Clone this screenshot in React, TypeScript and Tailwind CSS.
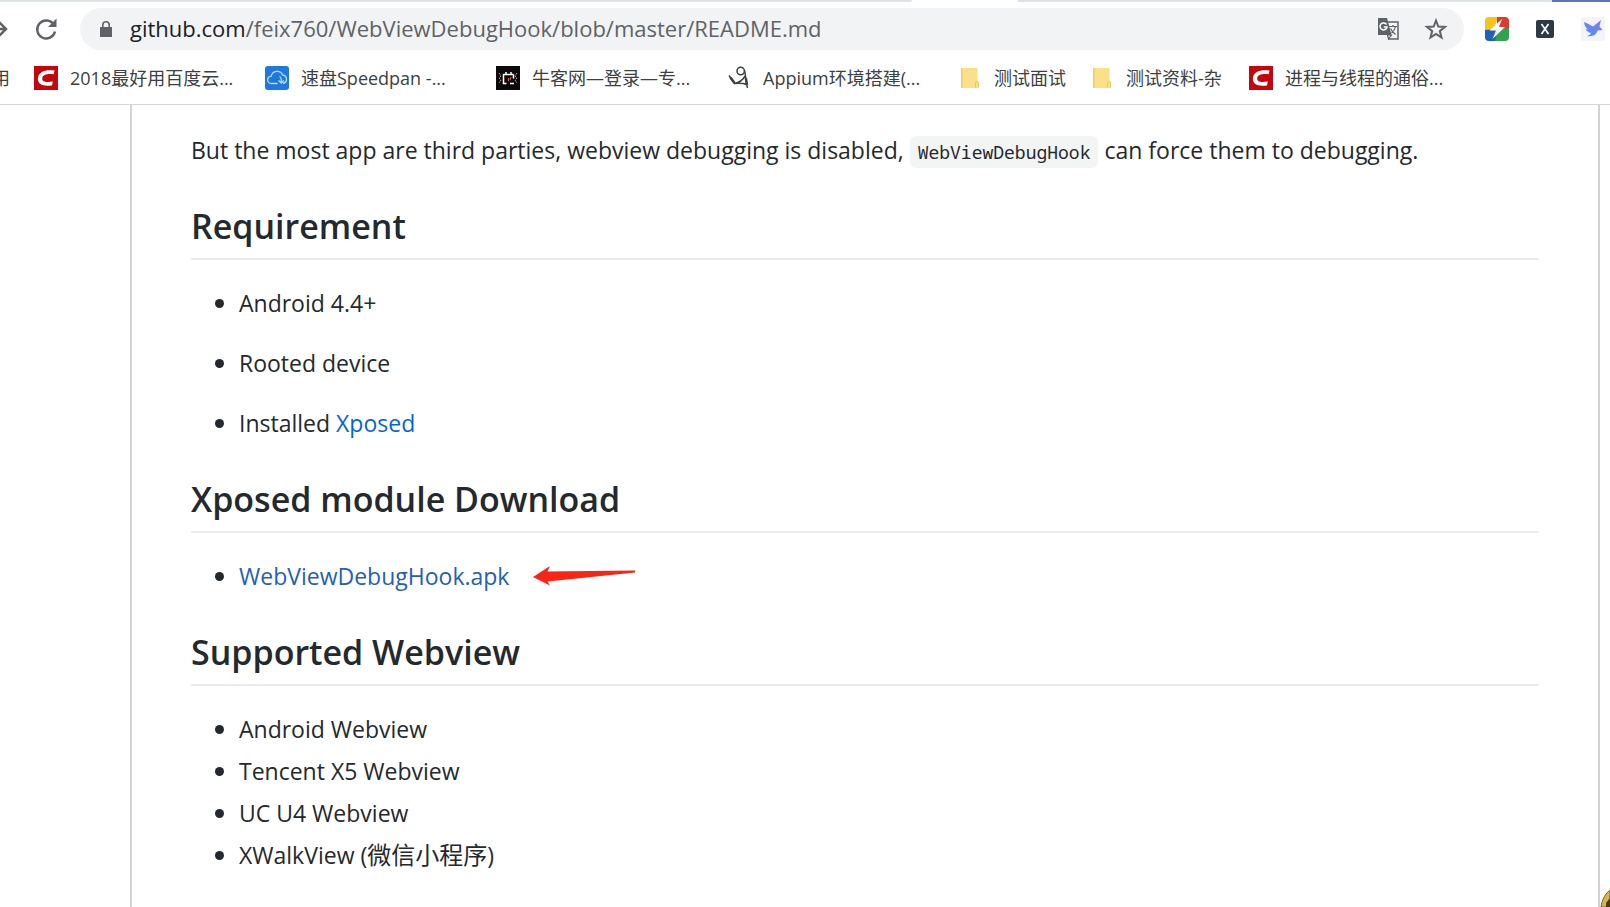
import type { ReactNode } from "react";

interface Bookmark {
  title: string;
  icon: ReactNode;
  width?: string;
}

function CsdnIcon() {
  return (
    <svg viewBox="0 0 24 24" className="size-6">
      <rect width="24" height="24" fill="#c4070f" />
      <path
        d="M20.5 4.6 19.7 8.2C14 7.4 8.6 8.2 8.2 12.2c-.4 4 4.600 4.300 10.600 3.400L18 19.400C10 20.600 3.600 19.200 3.900 12.600 4.200 5.600 11.500 3.400 20.500 4.600Z"
        fill="#fff"
      />
    </svg>
  );
}

function CloudIcon() {
  return (
    <svg viewBox="0 0 24 24" className="size-6" fill="none">
      <rect width="24" height="24" rx="3" fill="#1f78dd" />
      <path
        d="M12.500 17.500H6.500a3.700 3.700 0 0 1-.3-7.400A6 6 0 0 1 17.600 9a4.300 4.300 0 0 1 .4 8.500M14.500 10.500c1.500.5 2 2 1.800 5.500M13.500 14.500l2.800 2.500 2.500-2.500"
        stroke="#b9dcff"
        strokeWidth="1.3"
      />
    </svg>
  );
}

function NowcoderIcon() {
  return (
    <svg viewBox="0 0 24 24" className="size-6" fill="none">
      <rect width="24" height="24" fill="#0b0909" />
      <path d="M10.500 8.500H7.500v9h3M7 8.500h10.500M10 8.500V6M15 8.500V6M17.500 8.500v4M14 17.500h4" stroke="#fff" strokeWidth="1.500" />
      <path d="M3 7l2 3-2 2 2 2-2 3M21 7l-2 3 2 2-2 2 2 3" stroke="#c39a95" strokeDasharray="2 1" />
      <path d="M12.500 12v3M15 11l-1 3" stroke="#e0655c" />
    </svg>
  );
}

function AppiumIcon() {
  return (
    <svg viewBox="0 0 24 24" className="size-6" fill="none" stroke="#3c4043" strokeWidth="1.500">
      <circle cx="13.700" cy="5" r="3.700" />
      <path d="M17.500 4.500c1.500 5 1 11 3 17.500M18.500 9.500c-3 5-7.500 7.500-11 8L2 9.500M7 17.500c4-.5 8.500-1 12.500 1" />
      <path d="M3.500 11.500l4 5.500M18.800 12l1.200 7" strokeWidth="2.500" />
    </svg>
  );
}

function FolderIcon() {
  return (
    <svg viewBox="0 0 24 24" className="size-6">
      <path d="M3 2h16.500v14l1.500.5V22H3Z" fill="#fbe08a" />
      <path d="M3 2h1.500v20H3Z" fill="#f0cd67" />
      <path d="M17.500 21.500v-4.500a1.500 1.500 0 0 1 3 0v4.500" fill="none" stroke="#ecc65c" />
    </svg>
  );
}

const bookmarks: Bookmark[] = [
  { title: "2018最好用百度云...", icon: <CsdnIcon />, width: "w-[171px]" },
  { title: "速盘Speedpan -...", icon: <CloudIcon />, width: "w-[171px]" },
  { title: "牛客网—登录—专...", icon: <NowcoderIcon />, width: "w-[171px]" },
  { title: "Appium环境搭建(...", icon: <AppiumIcon />, width: "w-[171px]" },
  { title: "测试面试", icon: <FolderIcon /> },
  { title: "测试资料-杂", icon: <FolderIcon />, width: "w-[99px]" },
  { title: "进程与线程的通俗...", icon: <CsdnIcon />, width: "w-[171px]" },
];

function TabStrip() {
  return (
    <div className="flex h-[2px] shrink-0 justify-between">
      <div className="w-[912px] rounded-br bg-[#dee1e6]" />
      <div className="ml-[106px] flex-1 bg-[#dee1e6]" />
      <div className="w-[58px] bg-[#5b76b4]" />
    </div>
  );
}

function Toolbar() {
  return (
    <div className="flex h-[54px] shrink-0 items-center">
      <button aria-label="Forward" className="w-[34px] shrink-0">
        <svg viewBox="0 0 24 24" className="-ml-4 size-6" fill="none" stroke="#5f6368" strokeWidth="2.500">
          <path d="M2 12h20M14 4l8 8-8 8" />
        </svg>
      </button>
      <button aria-label="Reload" className="w-[46px] shrink-0">
        <svg viewBox="0 0 24 24" className="size-6" fill="none" stroke="#5f6368" strokeWidth="2.400">
          <path d="M19.700 7.500A9 9 0 1 0 21 14.500" />
          <path d="M22.500 1.500v8.500H14Z" fill="#5f6368" stroke="none" />
        </svg>
      </button>
      <div className="flex h-[42px] flex-1 items-center rounded-full bg-[#f1f3f4] pr-4 pl-5">
        <svg viewBox="0 0 12 16" className="h-4 w-3 shrink-0">
          <path d="M0 6h12v10H0Z" fill="#5f6368" />
          <path d="M2.800 7V4a3.200 3.200 0 0 1 6.400 0v3" fill="none" stroke="#5f6368" strokeWidth="1.600" />
        </svg>
        <div className="ml-[18px] flex-1 pb-[2px] text-[22px] leading-8 text-[#5f6368]">
          <span className="text-[#202124]">github.com</span>/feix760/WebViewDebugHook/blob/master/README.md
        </div>
        <button aria-label="Translate this page">
          <svg viewBox="0 0 24 24" className="size-6">
            <path d="M10 5h12v17H12" fill="#f1f3f4" stroke="#5f6368" strokeWidth="1.500" />
            <path d="M2 1h9l4.500 17H2Z" fill="#5f6368" />
            <path d="M10.500 7.500A3.500 3.500 0 1 0 11 10H7.800" fill="none" stroke="#fff" strokeWidth="1.500" />
            <path d="M13 9.500h8M17 8v1.500M19.500 9.500c-.5 3-2 5-4 6.500M14.500 11.500c1 2 3 4.500 5 6M11.500 18l1 4 3-4Z" fill="none" stroke="#5f6368" strokeWidth="1.200" />
          </svg>
        </button>
        <button aria-label="Bookmark this page" className="ml-6">
          <svg viewBox="0 0 24 24" className="size-6" fill="none" stroke="#5f6368" strokeWidth="2">
            <path d="M12 3.500l2.300 6 6.700.4-5.200 4.200 1.700 6.400L12 17l-5.500 3.500 1.700-6.400L3 9.900l6.700-.4Z" />
          </svg>
        </button>
      </div>
      <div className="mr-[5px] ml-[21px] flex shrink-0 items-center gap-[27px]">
        <svg viewBox="0 0 24 24" className="size-6">
          <clipPath id="bolt-tile">
            <rect width="24" height="24" rx="4" />
          </clipPath>
          <g clipPath="url(#bolt-tile)">
            <path d="M0 0h13L9 12 0 14Z" fill="#f6c41c" />
            <path d="M12 0h12v12l-12 1Z" fill="#e03a2c" />
            <path d="M24 11v13H9l3-12Z" fill="#2fa34f" />
            <path d="M0 13l12-1-2 12H0Z" fill="#1b62b8" />
            <path d="M17 2 4.500 13.500h6.500L7.500 22l12.500-12h-6Z" fill="#fff" />
          </g>
        </svg>
        <svg viewBox="0 0 18 18" className="size-[18px]">
          <rect width="18" height="18" rx="2" fill="#2c3a44" />
          <path d="M5.500 4l7 10M12.500 4l-7 10" stroke="#fff" strokeWidth="1.700" />
        </svg>
        <svg viewBox="0 0 24 24" className="size-6">
          <linearGradient id="bird" x1="0" y1="1" x2="1" y2="0">
            <stop offset="0" stopColor="#4f8df7" />
            <stop offset="1" stopColor="#8a7bf0" />
          </linearGradient>
          <rect width="24" height="24" rx="2" fill="#f3f3fa" />
          <path d="M3 5c3 1.500 6 2.500 9 4.500L20 3l-1.500 6.500 3 3.500-5 .5C15.500 17.500 12 20 6 19c2-.5 3.500-1.500 4-3-2.500-.5-4.500-2-5.500-4l2.500.5C4.500 10.500 3.500 8 3 5Z" fill="url(#bird)" />
        </svg>
      </div>
    </div>
  );
}

function BookmarksBar() {
  return (
    <nav className="flex h-[49px] shrink-0 items-center overflow-hidden border-b border-[#d5d7da] pb-1 text-[18px] leading-6 text-[#3c4043]">
      <a href="#apps" className="flex w-[34px] shrink-0">
        <span className="-ml-2">用</span>
      </a>
      {bookmarks.map((bookmark) => (
        <a key={bookmark.title} href="#bookmark" className="mr-6 flex shrink-0 items-center gap-3 whitespace-nowrap">
          {bookmark.icon}
          <span className={bookmark.width}>{bookmark.title}</span>
        </a>
      ))}
    </nav>
  );
}

function SectionHeading({ children }: { children: ReactNode }) {
  return (
    <h2 className="mt-9 mb-[25px] border-b-2 border-[#eaecef] pb-[9px] text-[34px] leading-[45px] font-semibold">
      {children}
    </h2>
  );
}

function ListItem({ children }: { children: ReactNode }) {
  return (
    <li className="flex items-center gap-[15px]">
      <span className="size-[9px] shrink-0 rounded-full bg-[#24292e]" />
      <div className="flex h-9 items-center whitespace-pre">{children}</div>
    </li>
  );
}

function Arrow() {
  return (
    <svg viewBox="0 0 104 20" className="ml-6 h-5 w-[104px]">
      <path d="M0 11 17 0 14.500 5.500 102 4.500v2L14.500 15.500 17 19.500Z" fill="#fb2314" />
    </svg>
  );
}

export default function App() {
  return (
    <div className="relative flex h-screen flex-col overflow-hidden bg-white font-['Open_Sans','Noto_Sans_CJK_SC',sans-serif]">
      <TabStrip />
      <Toolbar />
      <BookmarksBar />
      <main className="mr-[10px] ml-[130px] min-h-0 flex-1 overflow-hidden border-x-2 border-[#d0d3d7] px-[59px] text-[23px] leading-9 text-[#24292e]">
        <article className="pt-[27px]">
          <p>
            But the most app are third parties, webview debugging is disabled,{" "}
            <code className="rounded-md bg-[#f3f4f4] px-2 py-1 font-['Noto_Sans_Mono','DejaVu_Sans_Mono',monospace] text-[18px] leading-none">
              WebViewDebugHook
            </code>{" "}
            can force them to debugging.
          </p>

          <SectionHeading>Requirement</SectionHeading>
          <ul className="space-y-6 pl-6">
            <ListItem>Android 4.4+</ListItem>
            <ListItem>Rooted device</ListItem>
            <ListItem>
              Installed{" "}
              <a href="#xposed" className="text-[#0366d6]">
                Xposed
              </a>
            </ListItem>
          </ul>

          <SectionHeading>Xposed module Download</SectionHeading>
          <ul className="pl-6">
            <ListItem>
              <a href="#apk" className="text-[#1f61b8]">
                WebViewDebugHook.apk
              </a>
              <Arrow />
            </ListItem>
          </ul>

          <SectionHeading>Supported Webview</SectionHeading>
          <ul className="space-y-[6px] pl-6">
            <ListItem>Android Webview</ListItem>
            <ListItem>Tencent X5 Webview</ListItem>
            <ListItem>UC U4 Webview</ListItem>
            <ListItem>
              XWalkView (<span className="text-[24px]">微信小程序</span>)
            </ListItem>
          </ul>
        </article>
      </main>

      {/* Edge of the floating badge */}
      <svg viewBox="0 0 10 18" className="absolute right-0 bottom-0 h-[18px] w-[10px]">
        <path d="M10 1C6 4 2 10 1 18h9Z" fill="#d9b64a" stroke="#6b6046" />
        <path d="M10 9 6 14v4h4Z" fill="#4a3a17" />
      </svg>
    </div>
  );
}
